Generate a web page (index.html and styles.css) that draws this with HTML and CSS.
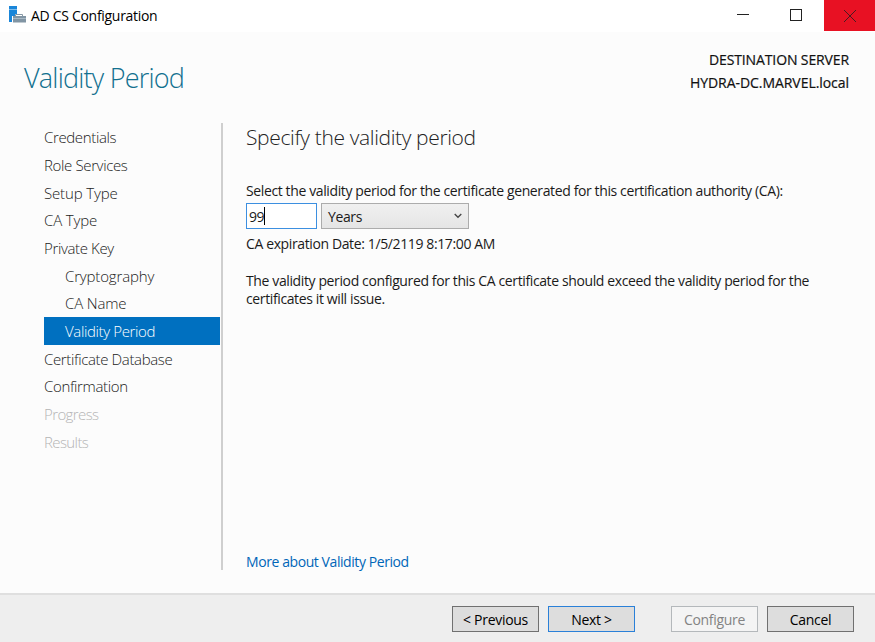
FILE: index.html
```html
<!DOCTYPE html>
<html lang="en">
<head>
  <meta charset="UTF-8" />
  <meta name="viewport" content="width=device-width, initial-scale=1.0"/>
  <title>AD CS Configuration</title>
  <link rel="stylesheet" href="styles.css">
</head>
<body>
  <div class="window">
    <!-- Title bar -->
    <div class="titlebar">
      <svg class="app-icon" width="18" height="18" viewBox="0 0 18 18">
        <rect x="0" y="0" width="8" height="16" fill="#1a86d9"/>
        <rect x="0" y="3" width="8" height="1" fill="#7fbdec"/>
        <path d="M3 17V10h3V8h9v2h3v7z" fill="#fff"/>
        <path d="M6.500 10.500V8.500h7v2" fill="none" stroke="#8698a5"/>
        <rect x="4" y="10" width="13" height="6.500" fill="#8195a4"/>
        <rect x="4" y="12" width="13" height="1" fill="#a9b9c5"/>
      </svg>
      <span class="app-title">AD CS Configuration</span>
      <div class="window-controls">
        <button class="control" aria-label="Minimize">
          <svg width="12" height="12" viewBox="0 0 12 12"><path d="M0 5.500h12" stroke="#222"/></svg>
        </button>
        <button class="control" aria-label="Maximize">
          <svg width="12" height="12" viewBox="0 0 12 12"><rect x="0.500" y="0.500" width="11" height="11" fill="none" stroke="#222"/></svg>
        </button>
        <button class="control close" aria-label="Close">
          <svg width="12" height="12" viewBox="0 0 12 12"><path d="M0 0l12 12M12 0L0 12" stroke="#4a1a20"/></svg>
        </button>
      </div>
    </div>

    <div class="header">
      <h1>Validity Period</h1>
      <div class="server">
        <div class="server-label">DESTINATION SERVER</div>
        <div class="server-name">HYDRA-DC.MARVEL.local</div>
      </div>
    </div>

    <div class="main">
      <ul class="steps">
        <li>Credentials</li>
        <li>Role Services</li>
        <li class="loose">Setup Type</li>
        <li class="loose">CA Type</li>
        <li>Private Key</li>
        <li class="sub loose">Cryptography</li>
        <li class="sub loose">CA Name</li>
        <li class="sub active">Validity Period</li>
        <li>Certificate Database</li>
        <li>Confirmation</li>
        <li class="disabled">Progress</li>
        <li class="disabled">Results</li>
      </ul>

      <div class="content">
        <h2>Specify the validity period</h2>
        <p class="prompt">Select the validity period for the certificate generated for this certification authority (CA):</p>
        <div class="fields">
          <div class="number-box">99<span class="caret"></span></div>
          <div class="select-box">
            <span>Years</span>
            <svg width="8" height="6" viewBox="0 0 8 6"><path d="M0.700 1L4 4.300 7.300 1" fill="none" stroke="#444" stroke-width="1.300"/></svg>
          </div>
        </div>
        <p class="expiration">CA expiration Date: 1/5/2119 8:17:00 AM</p>
        <p class="note">The validity period configured for this CA certificate should exceed the validity period for the<br>certificates it will issue.</p>
        <a class="more">More about Validity Period</a>
      </div>
    </div>

    <div class="footer">
      <button class="btn">&lt; Previous</button>
      <button class="btn primary">Next &gt;</button>
      <button class="btn off" disabled>Configure</button>
      <button class="btn">Cancel</button>
    </div>
  </div>
</body>
</html>
```

FILE: styles.css
```css
body {
  margin: 0;
  font-family: "Open Sans", "Noto Sans", sans-serif;
  font-size: 14px;
  color: #1a1a1a;
}

h1, h2, p, ul {
  margin: 0;
  padding: 0;
}

.window {
  width: 875px;
  height: 642px;
  background: #fcfcfc;
  display: flex;
  flex-direction: column;
  overflow: hidden;
  white-space: nowrap;
}

.titlebar {
  height: 32px;
  background: #fff;
  display: flex;
  align-items: flex-start;
  padding-left: 9px;
}

.app-icon {
  margin-top: 6px;
}

.app-title {
  margin-left: 4px;
  line-height: 32px;
  color: #000;
  letter-spacing: -0.3px;
}

.window-controls {
  margin-left: auto;
  display: flex;
}

.control {
  width: 53px;
  height: 30px;
  padding: 0;
  border: none;
  background: none;
  display: flex;
  align-items: center;
  justify-content: center;
}

.control.close {
  width: 51px;
  height: 31px;
  margin-left: 2px;
  background: #e81123;
}

.header {
  height: 91px;
  display: flex;
  justify-content: space-between;
  padding: 0 26px 0 24px;
}

h1 {
  font-size: 27px;
  font-weight: 300;
  line-height: 92px;
  color: #12708f;
  letter-spacing: -0.78px;
}

.server {
  padding-top: 16px;
  text-align: right;
  line-height: 23px;
  color: #111;
  letter-spacing: -0.12px;
  -webkit-text-stroke: 0.2px #111;
}

.server-name {
  letter-spacing: -0.05px;
}

.main {
  height: 447px;
  display: flex;
  padding-left: 44px;
}

.steps {
  width: 176px;
  padding: 0.4px 1px 0 0;
  border-right: 2px solid #cfcfcf;
  list-style: none;
  font-size: 15px;
  font-weight: 300;
  letter-spacing: -0.36px;
  color: #222;
}

.steps li {
  height: 27.660px;
  line-height: 29.400px;
}

.steps .sub {
  padding-left: 21px;
}

.steps .loose {
  letter-spacing: -0.15px;
}

.steps .active {
  background: #0070c0;
  color: #fff;
}

.steps .disabled {
  letter-spacing: -0.6px;
  color: #b4b4b4;
}

.content {
  flex: 1;
  display: flex;
  flex-direction: column;
  padding-left: 23px;
  align-items: flex-start;
  letter-spacing: -0.38px;
}

h2 {
  margin-top: -1px;
  font-size: 21px;
  font-weight: 300;
  line-height: 30px;
  color: #222;
  letter-spacing: -0.36px;
}

.prompt {
  margin-top: 29px;
  line-height: 20px;
}

.fields {
  margin-top: 2px;
  display: flex;
  gap: 4px;
}

.number-box,
.select-box {
  box-sizing: border-box;
  height: 26px;
  display: flex;
  align-items: center;
}

.number-box {
  width: 71px;
  padding-left: 2px;
  border: 1px solid #3c8fe0;
  background: #fff;
}

.caret {
  width: 1px;
  height: 18px;
  background: #000;
}

.select-box {
  width: 148px;
  padding: 0 6px;
  border: 1px solid #acacac;
  background: linear-gradient(#f0f0f0, #e5e5e5);
  justify-content: space-between;
}

.expiration {
  margin-top: 5px;
  line-height: 20px;
}

.note {
  margin-top: 18px;
  line-height: 18px;
}

.more {
  margin-top: auto;
  margin-bottom: -2px;
  line-height: 20px;
  color: #0066b8;
  letter-spacing: -0.42px;
}

.footer {
  flex: 1;
  box-sizing: border-box;
  margin-top: 23px;
  padding: 11px 21px 0 0;
  border-top: 2px solid #dfdfdf;
  background: #eee;
  display: flex;
  justify-content: flex-end;
  align-items: flex-start;
}

.btn {
  box-sizing: border-box;
  width: 87px;
  height: 26px;
  padding: 0;
  margin-left: 9px;
  border: 1px solid #707070;
  background: #ddd;
  font: inherit;
  letter-spacing: -0.3px;
  color: #000;
}

.btn.primary {
  border-color: #2a80d8;
}

.btn.off {
  margin-left: 36px;
  border-color: #b4b8bb;
  background: #f4f4f4;
  color: #838383;
}
```
